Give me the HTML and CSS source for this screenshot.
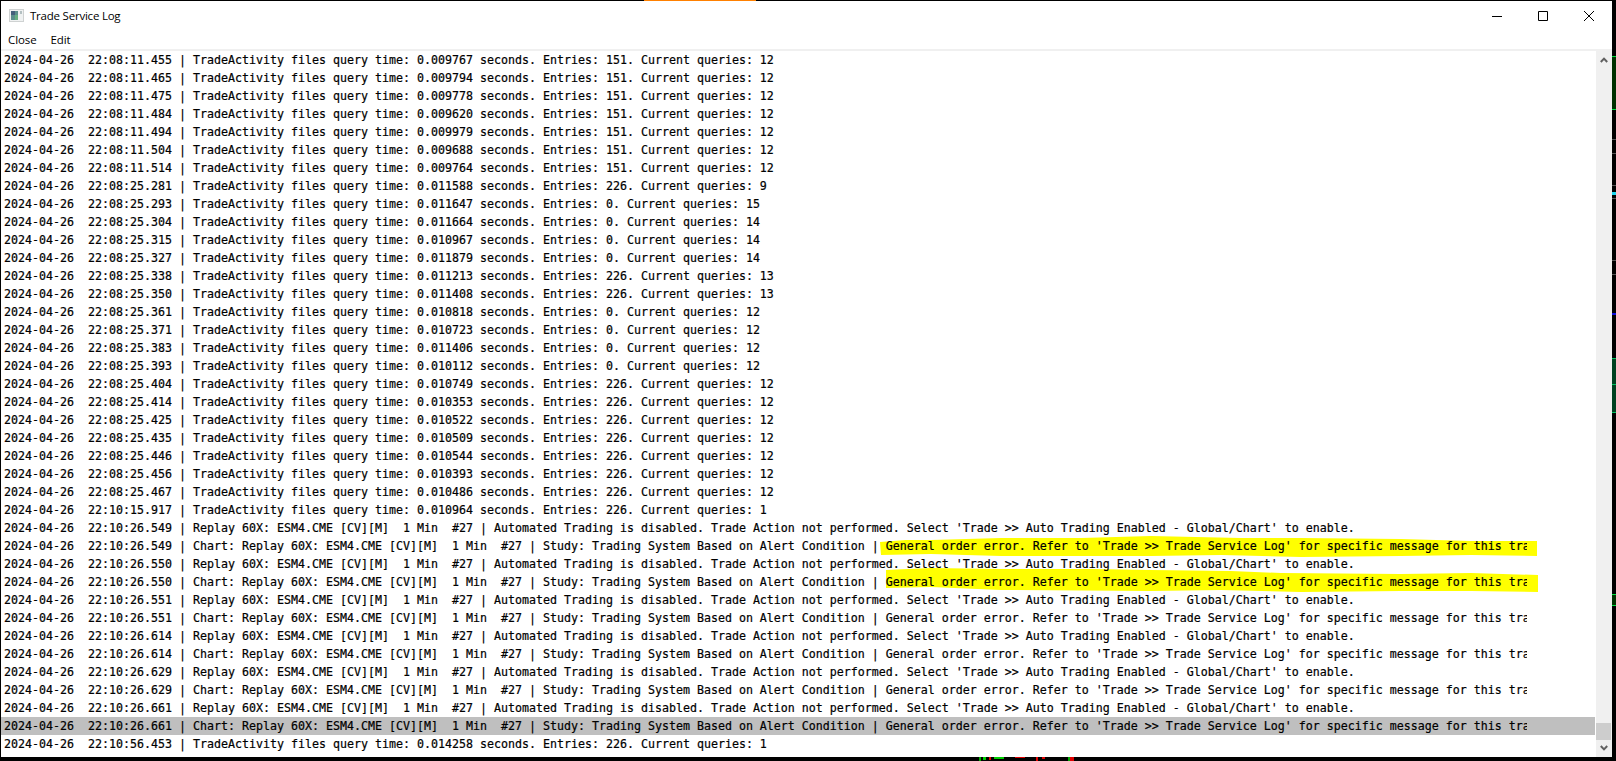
FILE: index.html
```html
<!DOCTYPE html>
<html lang="en">
<head>
<meta charset="utf-8">
<title>Trade Service Log</title>
<link rel="stylesheet" href="styles.css">
</head>
<body>
<div class="desktop">
  <i class="bg orange"></i>
  <i class="bg g1"></i><i class="bg l1"></i><i class="bg l2"></i><i class="bg l3"></i><i class="bg cyan"></i><i class="bg l4"></i><i class="bg l5"></i><i class="bg l6"></i><i class="bg blue"></i><i class="bg t1"></i><i class="bg t2"></i><i class="bg g2"></i>
  <i class="bg c1"></i><i class="bg c2"></i><i class="bg c3"></i><i class="bg c4"></i><i class="bg c5"></i><i class="bg c6"></i><i class="bg c7"></i><i class="bg c8"></i>
  <div class="window">
    <header class="titlebar">
      <svg class="appicon" viewBox="0 0 15 13" width="15" height="13">
        <rect x="0" y="0" width="15" height="13" fill="#cfd2d2"/>
        <rect x="1" y="1" width="13" height="11" fill="#f0f2f2"/>
        <rect x="2" y="2" width="7" height="9" fill="#5b8f8c"/>
        <rect x="2" y="2" width="4" height="4" fill="#44607c"/>
        <rect x="6" y="6" width="3" height="5" fill="#66b080"/>
        <rect x="11" y="2" width="2" height="3" fill="#b4c0c2"/>
      </svg>
      <span class="title">Trade Service Log</span>
      <div class="controls">
        <span class="ctl"><svg viewBox="0 0 10 10" width="10" height="10"><path d="M0 5.5h10" stroke="#000" fill="none"/></svg></span>
        <span class="ctl"><svg viewBox="0 0 10 10" width="10" height="10"><path d="M.5 .5h9v9h-9z" stroke="#000" fill="none"/></svg></span>
        <span class="ctl"><svg viewBox="0 0 10 10" width="10" height="10"><path d="M0 0l10 10M10 0L0 10" stroke="#000" fill="none" stroke-width="1"/></svg></span>
      </div>
    </header>
    <nav class="menubar"><span>Close</span><span>Edit</span></nav>
    <div class="content">
      <div class="log">
        <svg class="marks" viewBox="0 0 1595 702" width="1595" height="702">
          <path d="M879 491 L905 489 L930 489 L1000 487 L1080 487 L1150 485 L1240 487 L1300 487 L1400 488 L1470 490 L1536 490 L1536 505 L1470 504 L1400 505 L1300 506 L1220 504 L1150 505 L1000 505 L930 503 L880 504 Z" fill="#ff0"/>
          <path d="M885 519 L930 517 L1000 518 L1090 518 L1150 519 L1230 520 L1280 522 L1400 523 L1470 522 L1537 524 L1537 541 L1470 540 L1400 540 L1300 541 L1220 539 L1150 540 L1000 539 L930 536 L885 537 Z" fill="#ff0"/>
        </svg>
        <div class="row">2024-04-26  22:08:11.455 | TradeActivity files query time: 0.009767 seconds. Entries: 151. Current queries: 12</div>
        <div class="row">2024-04-26  22:08:11.465 | TradeActivity files query time: 0.009794 seconds. Entries: 151. Current queries: 12</div>
        <div class="row">2024-04-26  22:08:11.475 | TradeActivity files query time: 0.009778 seconds. Entries: 151. Current queries: 12</div>
        <div class="row">2024-04-26  22:08:11.484 | TradeActivity files query time: 0.009620 seconds. Entries: 151. Current queries: 12</div>
        <div class="row">2024-04-26  22:08:11.494 | TradeActivity files query time: 0.009979 seconds. Entries: 151. Current queries: 12</div>
        <div class="row">2024-04-26  22:08:11.504 | TradeActivity files query time: 0.009688 seconds. Entries: 151. Current queries: 12</div>
        <div class="row">2024-04-26  22:08:11.514 | TradeActivity files query time: 0.009764 seconds. Entries: 151. Current queries: 12</div>
        <div class="row">2024-04-26  22:08:25.281 | TradeActivity files query time: 0.011588 seconds. Entries: 226. Current queries: 9</div>
        <div class="row">2024-04-26  22:08:25.293 | TradeActivity files query time: 0.011647 seconds. Entries: 0. Current queries: 15</div>
        <div class="row">2024-04-26  22:08:25.304 | TradeActivity files query time: 0.011664 seconds. Entries: 0. Current queries: 14</div>
        <div class="row">2024-04-26  22:08:25.315 | TradeActivity files query time: 0.010967 seconds. Entries: 0. Current queries: 14</div>
        <div class="row">2024-04-26  22:08:25.327 | TradeActivity files query time: 0.011879 seconds. Entries: 0. Current queries: 14</div>
        <div class="row">2024-04-26  22:08:25.338 | TradeActivity files query time: 0.011213 seconds. Entries: 226. Current queries: 13</div>
        <div class="row">2024-04-26  22:08:25.350 | TradeActivity files query time: 0.011408 seconds. Entries: 226. Current queries: 13</div>
        <div class="row">2024-04-26  22:08:25.361 | TradeActivity files query time: 0.010818 seconds. Entries: 0. Current queries: 12</div>
        <div class="row">2024-04-26  22:08:25.371 | TradeActivity files query time: 0.010723 seconds. Entries: 0. Current queries: 12</div>
        <div class="row">2024-04-26  22:08:25.383 | TradeActivity files query time: 0.011406 seconds. Entries: 0. Current queries: 12</div>
        <div class="row">2024-04-26  22:08:25.393 | TradeActivity files query time: 0.010112 seconds. Entries: 0. Current queries: 12</div>
        <div class="row">2024-04-26  22:08:25.404 | TradeActivity files query time: 0.010749 seconds. Entries: 226. Current queries: 12</div>
        <div class="row">2024-04-26  22:08:25.414 | TradeActivity files query time: 0.010353 seconds. Entries: 226. Current queries: 12</div>
        <div class="row">2024-04-26  22:08:25.425 | TradeActivity files query time: 0.010522 seconds. Entries: 226. Current queries: 12</div>
        <div class="row">2024-04-26  22:08:25.435 | TradeActivity files query time: 0.010509 seconds. Entries: 226. Current queries: 12</div>
        <div class="row">2024-04-26  22:08:25.446 | TradeActivity files query time: 0.010544 seconds. Entries: 226. Current queries: 12</div>
        <div class="row">2024-04-26  22:08:25.456 | TradeActivity files query time: 0.010393 seconds. Entries: 226. Current queries: 12</div>
        <div class="row">2024-04-26  22:08:25.467 | TradeActivity files query time: 0.010486 seconds. Entries: 226. Current queries: 12</div>
        <div class="row">2024-04-26  22:10:15.917 | TradeActivity files query time: 0.010964 seconds. Entries: 226. Current queries: 1</div>
        <div class="row">2024-04-26  22:10:26.549 | Replay 60X: ESM4.CME [CV][M]  1 Min  #27 | Automated Trading is disabled. Trade Action not performed. Select 'Trade &gt;&gt; Auto Trading Enabled - Global/Chart' to enable.</div>
        <div class="row"><span class="clip">2024-04-26  22:10:26.549 | Chart: Replay 60X: ESM4.CME [CV][M]  1 Min  #27 | Study: Trading System Based on Alert Condition | General order error. Refer to 'Trade &gt;&gt; Trade Service Log' for specific message for this tra</span></div>
        <div class="row">2024-04-26  22:10:26.550 | Replay 60X: ESM4.CME [CV][M]  1 Min  #27 | Automated Trading is disabled. Trade Action not performed. Select 'Trade &gt;&gt; Auto Trading Enabled - Global/Chart' to enable.</div>
        <div class="row"><span class="clip">2024-04-26  22:10:26.550 | Chart: Replay 60X: ESM4.CME [CV][M]  1 Min  #27 | Study: Trading System Based on Alert Condition | General order error. Refer to 'Trade &gt;&gt; Trade Service Log' for specific message for this tra</span></div>
        <div class="row">2024-04-26  22:10:26.551 | Replay 60X: ESM4.CME [CV][M]  1 Min  #27 | Automated Trading is disabled. Trade Action not performed. Select 'Trade &gt;&gt; Auto Trading Enabled - Global/Chart' to enable.</div>
        <div class="row"><span class="clip">2024-04-26  22:10:26.551 | Chart: Replay 60X: ESM4.CME [CV][M]  1 Min  #27 | Study: Trading System Based on Alert Condition | General order error. Refer to 'Trade &gt;&gt; Trade Service Log' for specific message for this tra</span></div>
        <div class="row">2024-04-26  22:10:26.614 | Replay 60X: ESM4.CME [CV][M]  1 Min  #27 | Automated Trading is disabled. Trade Action not performed. Select 'Trade &gt;&gt; Auto Trading Enabled - Global/Chart' to enable.</div>
        <div class="row"><span class="clip">2024-04-26  22:10:26.614 | Chart: Replay 60X: ESM4.CME [CV][M]  1 Min  #27 | Study: Trading System Based on Alert Condition | General order error. Refer to 'Trade &gt;&gt; Trade Service Log' for specific message for this tra</span></div>
        <div class="row">2024-04-26  22:10:26.629 | Replay 60X: ESM4.CME [CV][M]  1 Min  #27 | Automated Trading is disabled. Trade Action not performed. Select 'Trade &gt;&gt; Auto Trading Enabled - Global/Chart' to enable.</div>
        <div class="row"><span class="clip">2024-04-26  22:10:26.629 | Chart: Replay 60X: ESM4.CME [CV][M]  1 Min  #27 | Study: Trading System Based on Alert Condition | General order error. Refer to 'Trade &gt;&gt; Trade Service Log' for specific message for this tra</span></div>
        <div class="row">2024-04-26  22:10:26.661 | Replay 60X: ESM4.CME [CV][M]  1 Min  #27 | Automated Trading is disabled. Trade Action not performed. Select 'Trade &gt;&gt; Auto Trading Enabled - Global/Chart' to enable.</div>
        <div class="row selected"><span class="clip">2024-04-26  22:10:26.661 | Chart: Replay 60X: ESM4.CME [CV][M]  1 Min  #27 | Study: Trading System Based on Alert Condition | General order error. Refer to 'Trade &gt;&gt; Trade Service Log' for specific message for this tra</span></div>
        <div class="row">2024-04-26  22:10:56.453 | TradeActivity files query time: 0.014258 seconds. Entries: 226. Current queries: 1</div>
      </div>
      <div class="scrollbar">
        <svg class="arrow" viewBox="0 0 8 6" width="8" height="6"><path d="M.8 5L4 1.6 7.2 5" stroke="#606060" stroke-width="2" fill="none"/></svg>
        <div class="track"><div class="thumb"></div></div>
        <svg class="arrow" viewBox="0 0 8 6" width="8" height="6"><path d="M.8 1L4 4.4 7.2 1" stroke="#606060" stroke-width="2" fill="none"/></svg>
      </div>
    </div>
  </div>
</div>
</body>
</html>
```
FILE: styles.css
```css
html, body { margin: 0; padding: 0; background: #000; overflow: hidden; }
.desktop { position: relative; width: 1616px; height: 761px; background: #000; padding: 1px 4px 4px 1px; box-sizing: border-box; }
.window { position: relative; width: 1611px; height: 756px; background: #fff; display: flex; flex-direction: column; }
.titlebar { height: 30px; display: flex; align-items: center; padding-left: 8px; flex: none; }
.appicon { flex: none; margin-top: -1px; }
.title { font: 11.5px/16px "Open Sans", sans-serif; letter-spacing: -0.22px; color: #000; margin-left: 6px; }
.controls { margin-left: auto; display: flex; align-self: stretch; }
.ctl { width: 46px; display: flex; align-items: center; justify-content: center; }
.menubar { height: 18px; flex: none; display: flex; gap: 14px; padding-left: 7px; align-items: center; font: 11.5px/16px "Open Sans", sans-serif; letter-spacing: -0.1px; color: #000; }
.content { flex: 1; min-height: 0; display: flex; border-top: 2px solid #f0f0f0; }
.log { position: relative; width: 1595px; flex: none; box-sizing: border-box; padding-right: 1px; }
.marks { position: absolute; left: 0; top: 0; }
.row { position: relative; height: 18px; box-sizing: border-box; padding-left: 3px; font: 11.63px/18px "DejaVu Sans Mono", monospace; -webkit-text-stroke: 0.2px #000; color: #000; white-space: pre; overflow: hidden; }
.clip { display: block; width: 1523px; overflow: hidden; }
.selected { background: #bfbfbf; }
.scrollbar { width: 16px; flex: none; background: #f0f0f0; display: flex; flex-direction: column; align-items: center; padding: 6px 0 6px; box-sizing: border-box; }
.arrow { flex: none; margin-left: -1px; }
.track { flex: 1; align-self: stretch; position: relative; }
.thumb { position: absolute; left: 0; right: 1px; bottom: 5px; height: 17px; background: #cdcdcd; }
.bg { position: absolute; display: block; }
.orange { left: 644px; top: 0; width: 112px; height: 1px; background: #ff8000; }
.g1, .g2, .t1, .t2, .l1, .l2, .l3, .l4, .l5, .l6, .cyan, .blue { left: 1612px; width: 4px; }
.g1 { top: 56px; height: 54px; background: #003000; border-top: 1px solid #00e040; border-bottom: 1px solid #00e040; box-sizing: border-box; }
.l1 { top: 139px; height: 1px; background: #555; }
.l2 { top: 153px; height: 1px; background: #555; }
.l3 { top: 185px; height: 1px; background: #555; }
.cyan { top: 192px; height: 3px; background: #20d8f0; }
.l4 { top: 198px; height: 1px; background: #555; }
.l5 { top: 260px; height: 1px; background: #555; }
.l6 { top: 274px; height: 1px; background: #555; }
.blue { top: 313px; height: 2px; background: #1010e0; }
.t1 { top: 358px; height: 26px; background: #004020; border-top: 1px solid #00c060; }
.t2 { top: 384px; height: 27px; background: #004020; border-top: 1px solid #00c060; border-bottom: 1px solid #00c060; }
.g2 { top: 594px; height: 12px; background: #003000; border-top: 1px solid #00e040; border-bottom: 1px solid #00e040; box-sizing: border-box; }
.c1, .c2, .c3, .c4, .c5, .c6, .c7, .c8 { top: 757px; height: 4px; }
.c1 { left: 979px; width: 2px; background: #0a0; }
.c2 { left: 983px; width: 3px; height: 3px; background: #0c0; }
.c3 { left: 989px; width: 2px; height: 3px; background: #d00; }
.c4 { left: 994px; width: 10px; height: 2px; background: #0c0; }
.c5 { left: 1015px; width: 10px; height: 1px; background: #d00; }
.c6 { left: 1036px; width: 2px; background: #d00; }
.c7 { left: 1042px; width: 3px; height: 2px; background: #d00; }
.c8 { left: 1068px; width: 2px; background: #0a0; border-right: 4px solid #d00; }
```
